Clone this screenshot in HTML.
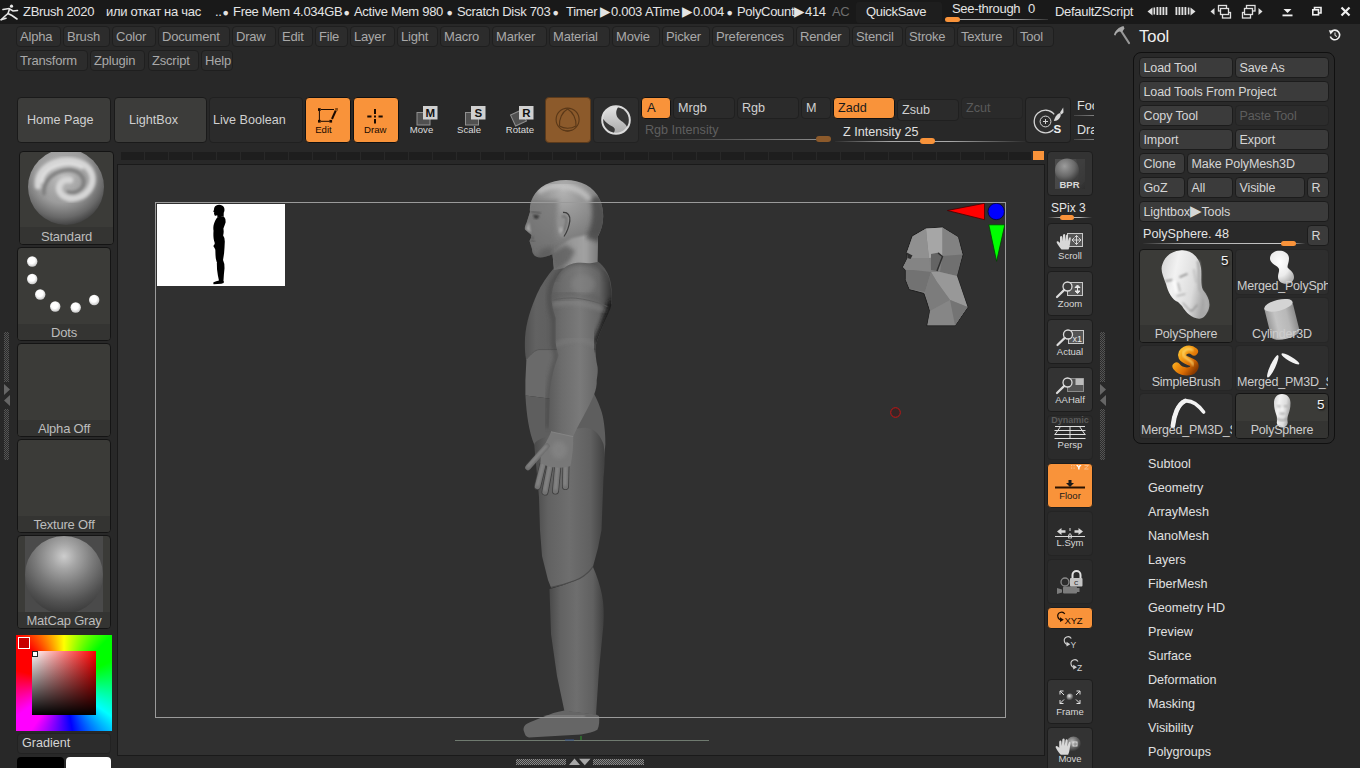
<!DOCTYPE html>
<html><head><meta charset="utf-8"><title>ZBrush 2020</title>
<style>
*{box-sizing:border-box;margin:0;padding:0}
html,body{width:1360px;height:768px;overflow:hidden;background:#282828}
body{font-family:"Liberation Sans","DejaVu Sans",sans-serif;font-size:12.6px;color:#c8c8c8;position:relative}
.abs{position:absolute}
#title{position:absolute;left:0;top:0;width:1360px;height:24px;background:#191919;color:#e4e4e4;font-size:13px;letter-spacing:-0.3px;line-height:24px;white-space:nowrap}
#title span{position:absolute;top:0}
.mb{position:absolute;height:21px;border:1px solid #1f1f1f;border-radius:4px;background:#2c2c2c;color:#a9a9a9;font-size:13px;letter-spacing:-0.2px;line-height:19px;padding-left:3px;white-space:nowrap}
.btn{position:absolute;border:1px solid #1a1a1a;border-radius:4px;background:#3c3c3a;color:#d0d0d0;white-space:nowrap}
.or{background:#f9933a;color:#1a1a1a;border-color:#111}
.sm{font-size:11px}
.tb{position:absolute;height:21px;border:1px solid #1c1c1c;border-radius:4px;background:#3b3b3b;color:#d6d6d6;font-size:12.5px;letter-spacing:-0.1px;line-height:21px;padding-left:3.5px;white-space:nowrap;overflow:hidden}
.sub{position:absolute;left:1148px;color:#e0e0e0;font-size:12.6px;line-height:16px;white-space:nowrap}
.thumb{position:absolute;border:1px solid #141414;border-radius:4px;background:#3b3b38;overflow:hidden}
.thumb .lb{position:absolute;left:0;right:0;bottom:0;height:16px;background:#343432;color:#bdbdbd;font-size:13px;line-height:18px;text-align:center;letter-spacing:-0.2px}
.sh{position:absolute;left:1047px;width:46px;border:1px solid #1d1d1d;border-radius:4px;background:#333;color:#d8d8d8;font-size:9.5px;text-align:center}
.sh .t{position:absolute;left:0;right:0;bottom:6px;line-height:11px}
.tl{background:#2e2e2e;border-color:#262626}
.nm{position:absolute;height:17px;color:#cdcdcd;font-size:12.5px;letter-spacing:-0.2px;line-height:17px;text-align:center;white-space:nowrap;overflow:hidden}
</style></head><body>
<!-- TITLE BAR -->
<div id="title">
<svg class="abs" style="left:0;top:3px" width="20" height="18" viewBox="0 0 20 18"><g fill="none" stroke="#e8e8e8" stroke-width="1.6" stroke-linecap="round"><circle cx="11.5" cy="3.2" r="1.6" fill="#e8e8e8" stroke="none"/><path d="M3 6.5 L9 5.5 L13 8 L17.5 7.5"/><path d="M9.5 6 L8 10.5 L12 12.5 L17 16"/><path d="M8 10.5 L4.5 13.5 L1.5 16.5"/><path d="M1 16.8 L6 15.2"/></g></svg>
<span style="left:23px">ZBrush 2020</span>
<span style="left:106px">или откат на час</span>
<span style="left:215px">..</span>
<span style="left:223px;font-size:10.5px;margin-left:-0.5px">●</span><span style="left:233px">Free Mem 4.034GB</span>
<span style="left:344px;font-size:10.5px;margin-left:-0.5px">●</span><span style="left:354px">Active Mem 980</span>
<span style="left:447px;font-size:10.5px;margin-left:-0.5px">●</span><span style="left:457px">Scratch Disk 703</span>
<span style="left:553px;font-size:10.5px;margin-left:-0.5px">●</span><span style="left:566px">Timer</span><span style="left:600px;font-size:13.5px;line-height:23px">▶</span><span style="left:611px">0.003</span>
<span style="left:645px">ATime</span><span style="left:682px;font-size:13.5px;line-height:23px">▶</span><span style="left:693px">0.004</span>
<span style="left:727px;font-size:10.5px;margin-left:-0.5px">●</span><span style="left:737px">PolyCount</span><span style="left:794px;font-size:13.5px;line-height:23px">▶</span><span style="left:805px">414</span>
<span style="left:832px;color:#6e6e6e">AC</span>
<div class="abs" style="left:856px;top:2px;width:86px;height:21px;background:#1e1e1e;border-radius:3px"></div>
<span style="left:866px">QuickSave</span>
<span style="left:952px;top:-2px;line-height:22px">See-through</span><span style="left:1028px;top:-2px;line-height:22px">0</span>
<div class="abs" style="left:958px;top:19px;width:90px;height:1px;background:linear-gradient(90deg,#aaa,#aaa 60%,#333)"></div>
<div class="abs" style="left:945px;top:17px;width:15px;height:5px;background:#f9933a;border-radius:3px"></div>
<span style="left:1055px">DefaultZScript</span>
<svg class="abs" style="left:1145px;top:4px" width="210" height="16" viewBox="1145 4 210 16">
<g fill="#e0e0e0"><path d="M1147.5 11.5 l5 -4 v8z"/><rect x="1153.5" y="7.5" width="1.6" height="7"/><rect x="1156.5" y="7" width="1.8" height="8"/><rect x="1159.5" y="7" width="1.8" height="8"/><rect x="1162.5" y="7" width="1.8" height="8"/><rect x="1165.5" y="7" width="1.8" height="8"/>
<rect x="1175.5" y="7" width="1.8" height="8"/><rect x="1178.5" y="7" width="1.8" height="8"/><rect x="1181.5" y="7" width="1.8" height="8"/><rect x="1184.5" y="7" width="1.8" height="8"/><rect x="1187.8" y="7.5" width="1.6" height="7"/><path d="M1195.5 11.5 l-5 -4 v8z"/>
<path d="M1210.5 11.5 l4 -3.5 v7z"/><path d="M1262.5 11.5 l-4 -3.5 v7z"/></g>
<g fill="#191919" stroke="#e0e0e0" stroke-width="1.3"><rect x="1218.5" y="5.500" width="8" height="5.500"/><rect x="1222.500" y="12.500" width="8" height="5.500"/><rect x="1220.500" y="8.500" width="8" height="6"/>
<rect x="1246.500" y="5.500" width="8.500" height="5.500"/><rect x="1242.500" y="12.500" width="8" height="5.500"/><rect x="1244.500" y="8.500" width="8" height="6"/></g>
<g fill="#f0f0f0"><path d="M1283.5 9 h8 l-4 4z"/><rect x="1282.5" y="14.5" width="10" height="1.8"/></g>
<g fill="none" stroke="#f0f0f0" stroke-width="1.6"><path d="M1314.500 9.500 v-2 h6.500 v5.500 h-2"/><rect x="1312.800" y="9.800" width="5.700" height="5"/><path d="M1341.500 7.500 l8 8 M1349.500 7.500 l-8 8" stroke-width="2.2"/></g>
</svg>
</div>
<!-- MENUS -->
<div id="menus">
<div class="mb" style="left:16px;top:26px;width:45px">Alpha</div>
<div class="mb" style="left:63px;top:26px;width:47px">Brush</div>
<div class="mb" style="left:112px;top:26px;width:44px">Color</div>
<div class="mb" style="left:158px;top:26px;width:72px">Document</div>
<div class="mb" style="left:232px;top:26px;width:44px">Draw</div>
<div class="mb" style="left:278px;top:26px;width:35px">Edit</div>
<div class="mb" style="left:315px;top:26px;width:33px">File</div>
<div class="mb" style="left:350px;top:26px;width:45px">Layer</div>
<div class="mb" style="left:397px;top:26px;width:41px">Light</div>
<div class="mb" style="left:440px;top:26px;width:50px">Macro</div>
<div class="mb" style="left:492px;top:26px;width:55px">Marker</div>
<div class="mb" style="left:549px;top:26px;width:61px">Material</div>
<div class="mb" style="left:612px;top:26px;width:48px">Movie</div>
<div class="mb" style="left:662px;top:26px;width:48px">Picker</div>
<div class="mb" style="left:712px;top:26px;width:82px">Preferences</div>
<div class="mb" style="left:796px;top:26px;width:54px">Render</div>
<div class="mb" style="left:852px;top:26px;width:51px">Stencil</div>
<div class="mb" style="left:905px;top:26px;width:50px">Stroke</div>
<div class="mb" style="left:957px;top:26px;width:57px">Texture</div>
<div class="mb" style="left:1016px;top:26px;width:38px">Tool</div>
<div class="mb" style="left:16px;top:50px;width:72px">Transform</div>
<div class="mb" style="left:90px;top:50px;width:55px">Zplugin</div>
<div class="mb" style="left:148px;top:50px;width:51px">Zscript</div>
<div class="mb" style="left:201px;top:50px;width:32px">Help</div>
</div>
<!-- TOOLBAR -->
<div class="btn" style="left:17px;top:97px;width:94px;height:46px;line-height:44px;padding-left:9px">Home Page</div>
<div class="btn" style="left:114px;top:97px;width:93px;height:46px;line-height:44px;padding-left:14px">LightBox</div>
<div class="btn" style="left:209px;top:97px;width:94px;height:46px;line-height:44px;padding-left:3px;background:#2b2b2b;border-color:#202020">Live Boolean</div>
<div class="btn or" style="left:305px;top:97px;width:46px;height:46px"></div>
<div class="btn or" style="left:353px;top:97px;width:46px;height:46px"></div>
<div class="btn" style="left:545px;top:97px;width:46px;height:46px;background:#8c5a2b;border-color:#5a3a1c"></div>
<div class="btn" style="left:593px;top:97px;width:46px;height:46px;background:#2d2d2d;border-color:#222"></div>
<svg class="abs" style="left:300px;top:95px" width="345" height="50" viewBox="300 95 345 50" font-family="Liberation Sans, sans-serif" font-size="9.600" text-anchor="middle">
<!-- edit icon -->
<g stroke="#1a0a00" fill="none"><path d="M321 109.500 h13 M319.400 111 v9 M321 121.300 h8.500" stroke-width="1"/><path d="M335.800 110.500 L332 119" stroke-width="2"/></g>
<g fill="#1a0a00"><rect x="318" y="108.200" width="2.700" height="2.700"/><rect x="318" y="119.900" width="2.700" height="2.700"/><rect x="329.400" y="119.900" width="2.700" height="2.700"/></g><rect x="335.200" y="108" width="2.700" height="2.700" fill="#8a4a10"/>
<text x="323.500" y="132.800" fill="#1a0a00">Edit</text>
<!-- draw icon -->
<g stroke="#1a0a00" stroke-width="2"><path d="M375 109 v5 M375 115.500 v2 M375 119 v4.500 M367.300 116.500 h4.200 M378.500 116.500 h4.200"/></g>
<text x="375.300" y="132.800" fill="#1a0a00">Draw</text>
<!-- move -->
<rect x="417" y="112.500" width="13" height="12.500" fill="#505050" stroke="#909090" stroke-width="1"/><rect x="423" y="106" width="14.500" height="13.500" fill="#d0d0d0"/><text x="430.300" y="117.300" font-weight="bold" font-size="11.500" fill="#111">M</text>
<text x="421.500" y="132.800" fill="#dcdcdc">Move</text>
<!-- scale -->
<rect x="465.500" y="112.500" width="13" height="12.500" fill="#505050" stroke="#909090" stroke-width="1"/><rect x="471" y="106" width="14.500" height="13.500" fill="#d0d0d0"/><text x="478.300" y="117.300" font-weight="bold" font-size="11.500" fill="#111">S</text>
<text x="469" y="132.800" fill="#dcdcdc">Scale</text>
<!-- rotate -->
<rect x="512.500" y="112" width="12" height="12" fill="#505050" stroke="#909090" stroke-width="1" transform="rotate(-25 518.500 118)"/><rect x="519" y="106" width="14.500" height="13.500" fill="#d0d0d0"/><text x="526.300" y="117.300" font-weight="bold" font-size="11.500" fill="#111">R</text>
<text x="520" y="132.800" fill="#dcdcdc">Rotate</text>
<!-- gizmo -->
<g fill="none" stroke="#5a3818" stroke-width="1.100"><circle cx="567.600" cy="119.600" r="11.500"/><path d="M567.600 108.900 C573 112 576.500 119 576 126 C571 129 564 129 559.500 126 C559 119 562 112 567.600 108.900Z" stroke-linejoin="round"/><path d="M563.500 130 q4 1.800 8 0"/></g>
<!-- S sphere -->
<clipPath id="cS"><circle cx="616" cy="120" r="12.800"/></clipPath>
<linearGradient id="gS" x1="0" y1="0" x2="0" y2="1"><stop offset="0" stop-color="#e4e4e4"/><stop offset="1" stop-color="#a8a8a8"/></linearGradient>
<circle cx="616" cy="120" r="13.800" fill="url(#gS)" stroke="#dcdcdc" stroke-width="2"/>
<g fill="#383838" clip-path="url(#cS)"><path d="M618.800 106 C614.500 112 616 117 620 120 C623.500 122.500 626.500 124.500 628 129 L632 124 L630 108Z"/><path d="M602.500 118 C605.500 122.500 609 125 612.500 126.500 C615.500 128 615.500 131 613 134 L604 132 L600 120Z"/></g>
</svg>
<div class="btn or" style="left:641px;top:97px;width:30px;height:22px;line-height:20px;padding-left:5px;font-size:13px">A</div>
<div class="btn" style="left:673px;top:97px;width:62px;height:22px;line-height:20px;padding-left:4px;background:#2b2b2b;border-color:#202020">Mrgb</div>
<div class="btn" style="left:737px;top:97px;width:62px;height:22px;line-height:20px;padding-left:4px;background:#2b2b2b;border-color:#202020">Rgb</div>
<div class="btn" style="left:801px;top:97px;width:30px;height:22px;line-height:20px;padding-left:4px;background:#2b2b2b;border-color:#202020">M</div>
<div class="btn or" style="left:833px;top:97px;width:62px;height:22px;line-height:20px;padding-left:4px">Zadd</div>
<div class="btn" style="left:897px;top:99px;width:62px;height:22px;line-height:20px;padding-left:4px;background:#2b2b2b;border-color:#202020">Zsub</div>
<div class="btn" style="left:961px;top:97px;width:62px;height:22px;line-height:20px;padding-left:4px;background:#2a2a2a;border-color:#242424;color:#5a5a5a">Zcut</div>
<div class="abs" style="left:645px;top:122px;color:#5f5f5f;line-height:16px">Rgb Intensity</div>
<div class="abs" style="left:650px;top:139px;width:170px;height:1px;background:linear-gradient(90deg,#2e2e2e,#8a8a8a)"></div>
<div class="abs" style="left:816px;top:136px;width:15px;height:6px;background:#8c5a2b;border-radius:3px"></div>
<div class="abs" style="left:843px;top:124px;color:#e0e0e0;line-height:16px">Z Intensity 25</div>
<div class="abs" style="left:835px;top:141px;width:190px;height:1px;background:linear-gradient(90deg,#2e2e2e,#aaa 30%,#aaa 60%,#2e2e2e)"></div>
<div class="abs" style="left:920px;top:138px;width:15px;height:6px;background:#f9933a;border-radius:3px"></div>
<div class="btn" style="left:1025px;top:97px;width:46px;height:46px;background:#2d2d2d;border-color:#1e1e1e"></div>
<svg class="abs" style="left:1025px;top:97px" width="46" height="46" viewBox="1025 97 46 46"><g fill="none" stroke="#d4d4d4"><path d="M1054.200 114.300 A11.300 11.300 0 1 0 1053.500 129.500" stroke-width="1.300"/><circle cx="1045.500" cy="121.500" r="5.400" stroke-width="1"/><path d="M1043 121.500 h5 M1045.500 119 v5" stroke-width="1"/></g><path d="M1053.800 121 C1055 116.500 1057.500 113.500 1060.500 113 C1061.500 116 1059.500 119.500 1056 120.800Z" fill="#d8d8d8"/><path d="M1060 112.500 L1063.200 107.500 L1063.500 112.500 L1061.500 114.500Z" fill="#d8d8d8"/><text x="1053.600" y="132.800" font-family="Liberation Sans, sans-serif" font-weight="bold" font-size="11.500" fill="#f0f0f0">S</text></svg>
<div class="abs" style="left:1074px;top:97px;width:20px;padding-left:3px;height:46px;overflow:hidden;color:#e0e0e0;white-space:nowrap"><div style="line-height:18px">Focal Shift</div><div style="height:1px;background:linear-gradient(90deg,#444,#808080);margin-left:-3px"></div><div style="line-height:18px;margin-top:5px">Draw Size</div><div style="height:1px;background:linear-gradient(90deg,#444,#808080);margin-left:-3px"></div></div>
<!-- LEFT SHELF -->
<div class="thumb" style="left:19px;top:151px;width:95px;height:94px"><svg class="abs" style="left:0;top:0" width="93" height="76" viewBox="0 0 93 76"><defs><radialGradient id="bs" cx="0.45" cy="0.35" r="0.65"><stop offset="0" stop-color="#bcbcbc"/><stop offset="0.55" stop-color="#9c9c9c"/><stop offset="0.85" stop-color="#686868"/><stop offset="1" stop-color="#444"/></radialGradient><filter id="bl1"><feGaussianBlur stdDeviation="1.6"/></filter></defs><circle cx="46" cy="35" r="38" fill="url(#bs)"/><g filter="url(#bl1)" fill="none" stroke-linecap="round"><path d="M18 34 C16 10 50 2 66 14 C82 28 66 50 48 46 C34 42 38 26 50 28" stroke="#d6d6d6" stroke-width="6.500"/><path d="M24 42 C22 22 48 12 60 22 C70 32 58 44 48 40" stroke="#7c7c7c" stroke-width="3.500"/><path d="M22 30 C24 14 48 8 62 16" stroke="#e4e4e4" stroke-width="2.500"/></g></svg><div class="lb" style="height:17px;line-height:19px">Standard</div></div>
<div class="thumb" style="left:17px;top:247px;width:94px;height:94px"><svg class="abs" style="left:0;top:0" width="92" height="76" viewBox="17.800 248 92 76"><defs><radialGradient id="dt" cx="0.45" cy="0.4" r="0.6"><stop offset="0.5" stop-color="#fff"/><stop offset="1" stop-color="#c8c8c8"/></radialGradient></defs><g fill="url(#dt)"><circle cx="32" cy="261.500" r="5.200"/><circle cx="32" cy="279" r="5.200"/><circle cx="40" cy="294.500" r="5.200"/><circle cx="55" cy="306.500" r="5.200"/><circle cx="75.500" cy="307.500" r="5.200"/><circle cx="94" cy="300" r="5.200"/></g></svg><div class="lb">Dots</div></div>
<div class="thumb" style="left:17px;top:343px;width:94px;height:94px"><div class="lb">Alpha Off</div></div>
<div class="thumb" style="left:17px;top:439px;width:94px;height:94px"><div class="lb">Texture Off</div></div>
<div class="thumb" style="left:17px;top:535px;width:94px;height:94px"><div class="abs" style="left:7px;top:0;width:78px;height:76px;background:#4a4a4a"></div><div class="abs" style="left:7px;top:0px;width:78px;height:78px;border-radius:50%;background:radial-gradient(circle at 50% 26%,#cdcdcd 0,#a6a6a6 18%,#7a7a7a 42%,#525252 66%,#343434 88%,#262626 100%)"></div><div class="lb">MatCap Gray</div></div>
<!-- color picker -->
<div class="abs" style="left:16px;top:635px;width:96px;height:96px;background:conic-gradient(from -45deg at 50% 50%,#f00 0deg,#ff0 45deg,#0f0 90deg,#0f0 110deg,#0ff 170deg,#00f 215deg,#f0f 260deg,#f0f 280deg,#f00 330deg,#f00 360deg)"></div>
<div class="abs" style="left:32px;top:651px;width:64px;height:64px;background:linear-gradient(180deg,rgba(0,0,0,0),#000),linear-gradient(90deg,#fff,#f00)"></div>
<div class="abs" style="left:18px;top:637px;width:12px;height:12px;background:#c80000;border:1px solid #fff"></div>
<div class="abs" style="left:32px;top:651px;width:6px;height:6px;background:#fff;border:1px solid #222"></div>
<div class="btn" style="left:17px;top:733px;width:94px;height:21px;line-height:19px;padding-left:4px;background:#2c2c2c;border-color:#222;color:#d4d4d4">Gradient</div>
<div class="abs" style="left:17px;top:757px;width:47px;height:14px;background:#000;border-radius:4px"></div>
<div class="abs" style="left:66px;top:757px;width:45px;height:14px;background:#fff;border-radius:4px"></div>
<!-- left divider -->
<div class="abs" style="left:4px;top:332px;width:5px;height:50px;background:repeating-conic-gradient(#555 0 25%,#2a2a2a 0 50%) 0 0/2px 2px"></div>
<div class="abs" style="left:4px;top:409px;width:5px;height:51px;background:repeating-conic-gradient(#555 0 25%,#2a2a2a 0 50%) 0 0/2px 2px"></div>
<svg class="abs" style="left:3px;top:383px" width="8" height="26" viewBox="0 0 8 26"><path d="M1 1 l6 5.500 l-6 5.500z M7 12 l-6 5.500 l6 5.500z" fill="#666"/></svg>
<!-- CANVAS -->
<div class="abs" style="left:121px;top:152px;width:910px;height:8px;background:repeating-linear-gradient(90deg,#1e1e1e 0,#1e1e1e 23px,#282828 23px,#282828 24px)"></div>
<div class="abs" style="left:1033px;top:151px;width:11px;height:9px;background:#f9933a"></div>
<div class="abs" style="left:117px;top:164px;width:928px;height:592px;background:#303030;border:1px solid #1a1a1a"></div>
<svg class="abs" style="left:118px;top:165px" width="926" height="590" viewBox="118 165 926 590">
<defs>
<linearGradient id="gH" x1="0" y1="0" x2="1" y2="0"><stop offset="0" stop-color="#4e4e4e"/><stop offset="0.18" stop-color="#646464"/><stop offset="0.5" stop-color="#7a7a7a"/><stop offset="0.8" stop-color="#6a6a6a"/><stop offset="1" stop-color="#444"/></linearGradient>
<linearGradient id="gArm" x1="0" y1="0" x2="1" y2="0"><stop offset="0" stop-color="#5c5c5c"/><stop offset="0.2" stop-color="#6c6c6c"/><stop offset="0.5" stop-color="#7a7a7a"/><stop offset="0.8" stop-color="#666"/><stop offset="1" stop-color="#343434"/></linearGradient>
<linearGradient id="gTor" x1="0" y1="0" x2="1" y2="0"><stop offset="0" stop-color="#525252"/><stop offset="0.15" stop-color="#626262"/><stop offset="0.45" stop-color="#5e5e5e"/><stop offset="1" stop-color="#505050"/></linearGradient>
<linearGradient id="gLeg" x1="0" y1="0" x2="1" y2="0"><stop offset="0" stop-color="#4a4a4a"/><stop offset="0.2" stop-color="#626262"/><stop offset="0.5" stop-color="#6e6e6e"/><stop offset="0.8" stop-color="#606060"/><stop offset="1" stop-color="#404040"/></linearGradient>
<radialGradient id="gHead" cx="0.5" cy="0.22" r="0.75" fx="0.48" fy="0.15"><stop offset="0" stop-color="#b4b4b4"/><stop offset="0.25" stop-color="#9a9a9a"/><stop offset="0.55" stop-color="#828282"/><stop offset="0.85" stop-color="#666"/><stop offset="1" stop-color="#505050"/></radialGradient>
<linearGradient id="gNeck" x1="0" y1="0" x2="1" y2="0"><stop offset="0" stop-color="#727272"/><stop offset="0.35" stop-color="#949494"/><stop offset="0.7" stop-color="#a2a2a2"/><stop offset="1" stop-color="#767676"/></linearGradient>
<filter id="b1"><feGaussianBlur stdDeviation="1"/></filter><filter id="b2"><feGaussianBlur stdDeviation="2.2"/></filter>
<clipPath id="cHead"><path id="pHead" d="M566 180 C580 180 594 186 600 200 C605 212 604 226 598 236 L597.500 262 L554 270 L552.500 254 C546 257 540 258.500 536 256.500 C533 255 532 252 532 249 L530.500 244 L529.500 241 L531 238 L531.500 235 L525 229.500 C524.500 228 525 226 526.500 223 L530 212 C529.500 207 530.500 202 533 197 C538 187 550 180 566 180Z"/></clipPath>
<clipPath id="cArm"><use href="#pArm"/></clipPath>
<path id="pTorso" d="M554 268 C547 276 541 285 537 294 C531 308 526 322 525 338 C524.500 350 525.500 358 526.400 360 L525.400 380 L525.400 396 C526 410 527 425 534 444 L539 497 L540 530 L542 556 L548 580 L551 587.400 L549.500 589 L551 634 L557 676 L564.400 711 L545 716.300 L527 723.800 L524 729.800 L527 737.300 L581 734.300 L597.400 729.800 L599 716.300 L596 714.800 L599 670 L603.400 625 L602 595 L593 568 L600.400 520 L603.500 477.600 L605.400 438.600 L602.500 413.200 L593.700 395.600 L596.700 380 L597.600 367.200 L595.700 345.700 L605.400 320.300 L611.300 302.700 L609.400 279.300 L601 266 L597.500 262Z"/>
</defs>
<rect x="157" y="204" width="128" height="82" fill="#fff"/>
<!-- silhouette -->
<g transform="translate(213.200 204.800) scale(0.1425) translate(-524 -180.200)" fill="#000"><use href="#pHead"/><use href="#pTorso"/><path d="M548 438 L525 470 L536 489 L544 495 L555 494 L565 489 L572 438Z"/></g>
<!-- floor line -->
<rect x="455" y="740" width="254" height="1" fill="#6f7a6f"/><rect x="580.500" y="736" width="1" height="4" fill="#2a9a2a"/><rect x="565" y="739.500" width="9" height="1" fill="#35508a"/>
<!-- FIGURE -->
<g id="fig">
<!-- back sliver of torso -->
<path d="M586 260 L597 261 C605 266 611 276 611.500 290 L611.500 304 L600 310 L586 272Z" fill="#555"/>
<!-- chest -->
<path d="M554 268 C547 276 541 285 537 294 C531 308 526 322 525 338 C524.500 350 525.500 358 526.400 360 L560 362 L594 340 L598 266Z" fill="url(#gTor)"/>
<!-- abdomen -->
<path d="M526.400 359.400 C531 354 535 350 539 349.600 L560 349.600 L560 400 L548.800 398.500 L525.400 395.600 L525.400 380Z" fill="#6a6a6a"/>
<path d="M526.400 359.400 C531 354 535 350 539 349.600 L558 349.600" fill="none" stroke="#565656" stroke-width="1"/>
<!-- pelvis / hip -->
<path d="M525.400 395.600 L548.800 398.500 L560 396 L593.700 393 C598 402 602 410 603.500 420 C605 430 605.400 436 605.400 444 L603 470 L534.200 444.400 C529 432 526.500 415 525.400 395.600Z" fill="#5e5e5e"/>
<!-- thigh -->
<path d="M534.200 444.400 C536 438 560 432 578 428.500 C590 426 598 430 603.500 444 C605.500 455 604.500 468 603.500 477.600 L601.500 530 L598 548 L593 566.500 C588 574 580 579 575 580.500 C566 584 558 586 551 587.400 L548 580 L542 556 L540 530 L539 497Z" fill="url(#gLeg)"/>
<!-- shin -->
<path d="M549.500 589 C558 587 568 583.500 575 580.500 C582 578 589 573 593 567 C597 576 600 585 602 595 C604 605 604 615 603.400 625 L599 670 L596 714.800 L564.400 711 L557 676 L551 634Z" fill="url(#gLeg)"/>
<path d="M551 587.400 C558 586 566 584 575 580.500 C580 579 588 574 593 566.500" fill="none" stroke="#4c4c4c" stroke-width="1.200"/>
<!-- foot -->
<path d="M564.400 710.500 C556 712 550 714 545 716.300 C538 719 531 721.500 527 723.800 C523.500 726 523 729 524 731.500 C525 735 526 737 529 737.500 L581 734.500 C588 733.500 594 732 597.400 729.800 C599.500 726 599.500 720 599 716 L596 714.500Z" fill="#666"/>
<path d="M545 717 C555 714.500 570 716 585 716" fill="none" stroke="#8a8a8a" stroke-width="2.500" filter="url(#b1)" opacity="0.7"/>
<!-- head -->
<g clip-path="url(#cHead)">
<rect x="520" y="175" width="90" height="100" fill="url(#gHead)"/>
<!-- neck -->
<path d="M550 252 L572 238 L600 232 L600 266 L553 273Z" fill="url(#gNeck)" filter="url(#b1)"/>
<path d="M551 254 L566 245 L575 251 L569 262 L554 271Z" fill="#5e5e5e" filter="url(#b2)" opacity="0.800"/>
<!-- face shading -->
<path d="M530 200 L558 200 L554 248 L536 258 L528 245 L524 229Z" fill="#747474" filter="url(#b2)" opacity="0.700"/>
<path d="M600 196 C608 210 608 230 599 242 L586 238 C593 224 594 210 590 198Z" fill="#4a4a4a" filter="url(#b2)" opacity="0.850"/>
<path d="M538 192 C552 182 578 184 590 200" fill="none" stroke="#cacaca" stroke-width="5" filter="url(#b2)" opacity="0.850"/>
<path d="M540 250 L552 246 L552 256 L538 258Z" fill="#585858" filter="url(#b2)" opacity="0.600"/>
<!-- eye -->
<path d="M533 214.500 L539.500 215.500 L537.500 219 L534.500 218.500Z" fill="#383838" filter="url(#b1)"/>
<path d="M531 211.500 L541 213.500" stroke="#505050" stroke-width="1.400" fill="none" filter="url(#b1)"/>
<path d="M530.500 241 L535 241.800" stroke="#4c4c4c" stroke-width="1.200" fill="none" filter="url(#b1)"/>
<path d="M526 229 L529 222 L531 233Z" fill="#a6a6a6" filter="url(#b1)"/>
<path d="M531 236 L534 238 L532 240Z" fill="#555" filter="url(#b1)"/>
</g>
<!-- ear -->
<path d="M559 216 C562 211 568 212 569.500 217 C570.500 223 568 231 565 236 C563 238.500 560 237 559 234 C557 229 557 221 559 216Z" fill="#909090" filter="url(#b1)"/>
<path d="M563 212.500 C568 212 570.500 216 569.800 221 C569 227 567 232 564 236.500" fill="none" stroke="#3c3c3c" stroke-width="1.300"/>
<path d="M562 217 C565 215.500 567 217.500 566.500 221 C566 226 564.500 230 562.500 233" fill="none" stroke="#5e5e5e" stroke-width="1.200" filter="url(#b1)"/>
<ellipse cx="561" cy="230" rx="2" ry="3" fill="#a8a8a8" filter="url(#b1)"/>
<path d="M566 268 C556 274 550 284 549.500 296 C549 306 552 314 553.500 320 L553.500 342 C554 350 556.500 354 556.500 358 C554 366 551 374 550 384 L548 400 L547.500 428" fill="none" stroke="#3c3c3c" stroke-width="4" filter="url(#b2)" opacity="0.550"/>
<!-- arm -->
<path id="pArm" d="M578 262.700 C565 263 554 275 551.700 295 C551 305 554 312 555.700 318 L555.700 342 C556 348 558 352 558.600 355.400 C556 362 553.500 370 552.700 375 C550.500 385 549.500 395 549.800 400 L548.800 428.800 L551 431.700 L573.200 436.600 C576 430 579 424 582 419 C587 410 591 402 593.700 395.600 C596 390 597 385 596.700 380 C597.500 375 598 371 597.600 367.200 C596 360 595 352 595.700 345.700 C598 337 602 328 605.400 320.300 C609 312 611.500 308 611.300 302.700 C612 295 611 287 609.400 279.300 C606 268 594 262 578 262.700Z" fill="url(#gArm)"/>
<g clip-path="url(#cArm)">
<path d="M552 280 C556 266 566 260 580 260 C596 260 606 266 611 280" fill="none" stroke="#4a4a4a" stroke-width="9" filter="url(#b2)" opacity="0.600"/>
<path d="M550 296 C562 293.500 572 293 578 294 C590 295.500 601 299 610 303" fill="none" stroke="#5a5a5a" stroke-width="5" filter="url(#b2)" opacity="0.450"/>
<path d="M552 304.500 C562 302.500 572 302 578 303 C590 304.500 600 308 609 312" fill="none" stroke="#8a8a8a" stroke-width="4" filter="url(#b2)" opacity="0.600"/>
<ellipse cx="583" cy="284" rx="12" ry="10" fill="#868686" filter="url(#b2)" opacity="0.500"/>
<path d="M612 300 C611 310 606 320 602 330 C598 338 596 344 596 350" fill="none" stroke="#181818" stroke-width="8" filter="url(#b2)" opacity="0.850"/>
<path d="M553 346 C564 340 576 338 584 340 C590 341.500 594 344 597 348" fill="none" stroke="#848484" stroke-width="4" filter="url(#b2)" opacity="0.500"/>
</g>
<path d="M553.700 299.800 C562 298 572 297.500 578 298.500 C590 300 600 303 607.400 306.600" fill="none" stroke="#5c5c5c" stroke-width="1" opacity="0.800"/>
<!-- hand -->
<g fill="none" stroke-linecap="round">
<g stroke="#3e3e3e" stroke-width="7"><path d="M544 460 L537.500 486.500"/><path d="M550.500 463 L545 492"/><path d="M558 464 L555.500 491"/><path d="M566 462 L565.500 486.500"/></g>
<g stroke="#727272" stroke-width="5.400"><path d="M544 460 L537.500 486.500"/><path d="M550.500 463 L545 492"/><path d="M558 464 L555.500 491"/><path d="M566 462 L565.500 486.500"/></g>
<g stroke="#8a8a8a" stroke-width="2.200" filter="url(#b1)"><path d="M543.500 462 L537.500 485"/><path d="M550 465 L545 490"/><path d="M557.500 466 L555.500 489"/><path d="M565.500 464 L565 485"/></g>
</g>
<path d="M551 431.700 L573.200 436.600 C573.500 446 572.500 456 570.500 466 C562 469 548 468 540.500 463 C540 456 543 447 548.800 437Z" fill="#787878"/>
<path d="M547 446 L528 467.500" fill="none" stroke="#6e6e6e" stroke-width="5.600" stroke-linecap="round"/>
<path d="M546.500 446 L528 466.500" fill="none" stroke="#8a8a8a" stroke-width="2.200" stroke-linecap="round" filter="url(#b1)"/>
<ellipse cx="559" cy="450" rx="8" ry="9" fill="#868686" filter="url(#b2)" opacity="0.700"/>
<path d="M551 431.700 L573.200 436.600" stroke="#8c8c8c" stroke-width="1" fill="none" opacity="0.700"/>
</g>
<!-- lowpoly head -->
<g stroke-linejoin="round">
<path d="M925.900 228.100 L942.500 227.100 L958.100 236.900 L963 254.400 L957.100 275.900 L967.900 307.200 L955.200 325.700 L926.900 325.700 L929.800 311.100 L923.900 293.500 L909.300 289.600 L905.400 279.800 L905.400 270.100 L902.500 267.100 L907.300 258.300 L906.400 252.500 L912.200 235.900Z" fill="#808080" stroke="#1e1e1e" stroke-width="1"/>
<path d="M926 228.500 L942.500 227.500 L942.500 256 L929 258 L927 240Z" fill="#a6a6a6"/>
<path d="M912.500 236.500 L926 228.500 L927 240 L929 258 L907.500 258 L906.800 252.500Z" fill="#909090"/>
<path d="M942.500 227.500 L958 237 L962.500 254.400 L942.500 256Z" fill="#828282"/>
<path d="M962.500 254.400 L957 276 L940 272 L942.500 256Z" fill="#707070"/>
<path d="M907.500 258 L929 258 L931 272 L913 270 L905.800 270 L903 267Z" fill="#848484"/>
<path d="M905.800 270 L913 270 L931 272 L925 292 L909.500 289 L905.800 279.800Z" fill="#727272"/>
<path d="M931 272 L940 272 L957 276 L967.500 307 L950 300 L937 282Z" fill="#989898"/>
<path d="M925 292 L931 272 L937 282 L950 300 L930 311Z" fill="#7c7c7c"/>
<path d="M950 300 L967.500 307 L955 325.300 L927.300 325.300 L930 311Z" fill="#868686"/>
<path d="M950 300 L967.500 307 L955 325.300Z" fill="#747474"/>
<path d="M931 254 L939 252.500 L942.500 256.500 L937 271 L931 270Z" fill="#646464"/>
<path d="M938 253 L942.500 256.500 L937 271" fill="none" stroke="#303030" stroke-width="1.500"/>
<path d="M906.800 252.500 L912.500 255.500 L910.500 259 L907.500 258Z" fill="#2e2e2e"/>
</g>
<!-- axis gizmo -->
<path d="M947.400 210.500 L984.500 203.300 L984.500 219.700Z" fill="#f00" stroke="#400" stroke-width="0.800"/>
<circle cx="996.200" cy="211.500" r="8.200" fill="#00f" stroke="#003" stroke-width="0.800"/>
<path d="M988.800 224.800 L1004.800 224.800 L996.600 261.300Z" fill="#0f0" stroke="#040" stroke-width="0.800"/>
<!-- cursor -->
<circle cx="895.500" cy="412.500" r="4.800" fill="#3a1a1a" fill-opacity="0.500" stroke="#c81414" stroke-width="1"/>
<!-- frame -->
<rect x="155.500" y="202.500" width="850" height="515" fill="none" stroke="#9a9a9a" stroke-width="1"/>
</svg>
<!-- bottom arrows -->
<div class="abs" style="left:516px;top:759px;width:50px;height:6px;background:repeating-conic-gradient(#8a8a8a 0 25%,#3a3a3a 0 50%) 0 0/2px 2px"></div>
<div class="abs" style="left:593px;top:759px;width:51px;height:6px;background:repeating-conic-gradient(#8a8a8a 0 25%,#3a3a3a 0 50%) 0 0/2px 2px"></div>
<svg class="abs" style="left:568px;top:758px" width="24" height="8" viewBox="0 0 24 8"><path d="M1 7 L6.500 0.500 L12 7Z M11 0.800 L22.500 0.800 L16.800 7.300Z" fill="#a8a8a8"/></svg>
<!-- SHELF -->
<div class="sh" style="top:151px;height:45px"></div>
<div class="abs" style="left:1051px;top:200px;width:40px;color:#e6e6e6;line-height:16px;white-space:nowrap;font-size:12px">SPix 3</div>
<div class="abs" style="left:1048px;top:217px;width:44px;height:1px;background:linear-gradient(90deg,#2a2a2a,#bbb 30%,#bbb 70%,#2a2a2a)"></div>
<div class="abs" style="left:1060px;top:215px;width:14px;height:5px;background:#f9933a;border-radius:3px"></div>
<div class="sh" style="top:223px;height:45px"><div class="t">Scroll</div></div>
<div class="sh" style="top:271px;height:45px"><div class="t">Zoom</div></div>
<div class="sh" style="top:319px;height:45px"><div class="t">Actual</div></div>
<div class="sh" style="top:367px;height:45px"><div class="t">AAHalf</div></div>
<div class="sh" style="top:415px;height:45px;background:#2b2b2b;border-color:#242424"><div class="abs" style="left:0;right:0;top:0px;font-size:9px;font-weight:bold;color:#5c5c5c;line-height:9px">Dynamic</div><div class="t" style="bottom:9px">Persp</div></div>
<div class="sh or" style="top:463px;height:45px;background:#f9933a;color:#1a1a1a"><div class="t">Floor</div></div>
<div class="sh" style="top:511px;height:45px;background:#2b2b2b;border-color:#242424"><div class="t" style="bottom:7px">L.Sym</div></div>
<div class="sh" style="top:559px;height:45px;background:#2b2b2b;border-color:#242424"></div>
<div class="sh or" style="top:607px;height:22px;background:#f9933a;color:#1a1a1a"></div>
<div class="sh" style="top:679px;height:45px"><div class="t">Frame</div></div>
<div class="sh" style="top:727px;height:45px"><div class="t" style="bottom:7px">Move</div></div>
<svg class="abs" style="left:1045px;top:148px" width="64" height="620" viewBox="1045 148 64 620" font-family="Liberation Sans, sans-serif">
<defs><radialGradient id="bpr" cx="0.4" cy="0.32" r="0.7"><stop offset="0" stop-color="#9c9c9c"/><stop offset="0.6" stop-color="#6a6a6a"/><stop offset="1" stop-color="#3a3a3a"/></radialGradient><linearGradient id="bprb" x1="0" y1="0" x2="1" y2="1"><stop offset="0" stop-color="#4a4a4a"/><stop offset="0.5" stop-color="#484848"/><stop offset="1" stop-color="#2e2e2e"/></linearGradient>
<radialGradient id="ball" cx="0.4" cy="0.35" r="0.65"><stop offset="0" stop-color="#e8e8e8"/><stop offset="0.5" stop-color="#8a8a8a"/><stop offset="1" stop-color="#323232"/></radialGradient>
<g id="mag"><circle cx="0" cy="0" r="4.500" fill="#3a3a3a" stroke="#dcdcdc" stroke-width="1.300"/><path d="M-3.200 3.400 L-10.500 10.500" stroke="#dcdcdc" stroke-width="2.200" stroke-linecap="round"/></g>
<g id="hand" fill="#d8d8d8"><path d="M-4.500 6.500 C-6.500 4 -8.500 1.500 -9.500 -1 C-9 -2.500 -7.500 -2 -6 0 L-6 -6 C-5.500 -7.500 -4 -7.500 -3.800 -6 L-3.500 -2 L-3 -8 C-2.500 -9.500 -1 -9.500 -0.800 -8 L-0.800 -2 L0 -7.500 C0.500 -9 2 -8.500 2 -7 L1.800 -1.500 L3 -5 C3.800 -6.500 5 -5.800 4.800 -4.500 L3.800 2 C3.500 4 3 5.500 2.500 6.500Z"/></g>
</defs>
<!-- BPR -->
<rect x="1055" y="159" width="30" height="30" fill="url(#bprb)"/><path d="M1076 159 h9 v22 q-4 6 -12 8 q10 -10 3 -30z" fill="#3a3a3a" opacity="0.700"/><circle cx="1067" cy="170.500" r="12" fill="url(#bpr)"/>
<text x="1069.500" y="187.500" font-size="9.500" font-weight="bold" fill="#d8d8d8" text-anchor="middle">BPR</text>
<!-- Scroll -->
<rect x="1067.500" y="233.500" width="15" height="13" fill="#555" stroke="#c8c8c8" stroke-width="1"/><path d="M1076.500 235.500 v9 M1072 240 h9 M1074.500 237.500 l2 -2 l2 2 M1074.500 242.500 l2 2 l2 -2 M1074 238 l-2 2 l2 2 M1079 238 l2 2 l-2 2" stroke="#e0e0e0" stroke-width="0.900" fill="none"/>
<use href="#hand" transform="translate(1066 243)"/>
<!-- Zoom -->
<rect x="1067.500" y="282.500" width="15" height="13" fill="#555" stroke="#c8c8c8" stroke-width="1"/><path d="M1077.500 286 v7 M1075 287.500 l2.500 -2.500 l2.500 2.500z M1075 291 l2.500 2.500 l2.500 -2.500z" stroke="#e8e8e8" stroke-width="1" fill="#e8e8e8"/>
<use href="#mag" transform="translate(1067.500 286.500)"/>
<!-- Actual -->
<rect x="1068.500" y="330.500" width="15" height="13" fill="#555" stroke="#c8c8c8" stroke-width="1"/><text x="1072.500" y="342" font-size="9" fill="#e8e8e8">x1</text>
<use href="#mag" transform="translate(1068 334.500)"/>
<!-- AAHalf -->
<rect x="1067.500" y="378.500" width="16" height="13" fill="#555" stroke="#8a8a8a" stroke-width="1"/><rect x="1075.500" y="378.500" width="8" height="6.500" fill="#bdbdbd"/>
<use href="#mag" transform="translate(1067.500 382.500)"/>
<!-- Persp grid -->
<g stroke="#e0e0e0" stroke-width="1" fill="none"><path d="M1055 426.500 h30 M1054.500 430.500 h31 M1054.500 434.500 h31 M1054.500 438.500 h31"/><path d="M1060.500 426.500 L1055 434.500 M1070 426.500 V438.500 M1079.500 426.500 L1085 434.500"/></g>
<!-- Floor -->
<rect x="1055" y="486.500" width="30" height="2" fill="#2a1200"/><path d="M1068.500 480 h3 v3 h2.500 l-4 4 l-4 -4 h2.500z" fill="#1a1a1a"/>
<g fill="#fbbd87"><rect x="1071" y="465" width="1.200" height="1.200"/><rect x="1073.500" y="465" width="1.200" height="1.200"/><rect x="1071" y="467.500" width="1.200" height="1.200"/><rect x="1073.500" y="467.500" width="1.200" height="1.200"/></g><path d="M1076 465 h2 l0.800 1.500 l0.800 -1.500 h2 l-2 2.500 v2 h-1.500 v-2z" fill="#fff"/><path d="M1084.500 465.500 h4 l-4 3.500 h4" stroke="#fbbd87" stroke-width="1" fill="none"/>
<!-- L.Sym -->
<g fill="#d8d8d8"><path d="M1057 531.500 l4.500 -3.500 v2.300 h4 v2.400 h-4 v2.300z M1083 531.500 l-4.500 -3.500 v2.300 h-4 v2.400 h4 v2.300z"/><rect x="1055" y="536" width="30" height="1"/><rect x="1069.500" y="528" width="1" height="3"/><rect x="1069.500" y="533" width="1" height="2"/><rect x="1068.500" y="535" width="3" height="3" fill="none" stroke="#d8d8d8" stroke-width="0.800"/></g>
<!-- camera lock -->
<g fill="#7c7c7c"><circle cx="1065" cy="582" r="4" fill="none" stroke="#8a8a8a" stroke-width="1.300"/><rect x="1063" y="586.500" width="14" height="7" rx="1"/><path d="M1057 588 l5 1.500 v3 l-5 1.500z"/><rect x="1077" y="588" width="2.500" height="4"/></g>
<path d="M1072.500 579 v-4 a4 4 0 0 1 8 0 v4" fill="none" stroke="#e0e0e0" stroke-width="2"/><rect x="1070" y="578" width="12.500" height="8.500" rx="1" fill="#c4c4c4"/><text x="1074" y="585" font-size="6" font-weight="bold" fill="#4a4a4a">C</text>
<!-- XYZ -->
<path d="M1064.800 614 a3.800 3.800 0 1 0 -3 5.800" fill="none" stroke="#1a0a00" stroke-width="1.200"/><path d="M1060 617.300 l3.800 2.500 l-3.800 2.200z" fill="#1a0a00"/>
<text x="1064.500" y="623.500" font-size="9.500" fill="#1a0a00" letter-spacing="-0.200">XYZ</text>
<!-- Y -->
<path d="M1071.300 638.500 a3.800 3.800 0 1 0 -3 5.800" fill="none" stroke="#d0d0d0" stroke-width="1.100"/><path d="M1066.500 641.800 l3.800 2.500 l-3.800 2.200z" fill="#d0d0d0"/><text x="1070.500" y="648" font-size="8.500" fill="#d0d0d0">Y</text>
<!-- Z -->
<path d="M1078 661.500 a3.800 3.800 0 1 0 -3 5.800" fill="none" stroke="#d0d0d0" stroke-width="1.100"/><path d="M1073.200 664.800 l3.800 2.500 l-3.800 2.200z" fill="#d0d0d0"/><text x="1077" y="671" font-size="8.500" fill="#d0d0d0">Z</text>
<!-- Frame -->
<circle cx="1070" cy="697" r="3.500" fill="url(#ball)"/>
<g stroke="#e0e0e0" stroke-width="1" fill="none"><path d="M1060 691 h3.500 M1060 691 v3.500 M1060 691 l4 4 M1080 691 h-3.500 M1080 691 v3.500 M1080 691 l-4 4 M1060 703.500 h3.500 M1060 703.500 v-3.500 M1060 703.500 l4 -4 M1080 703.500 h-3.500 M1080 703.500 v-3.500 M1080 703.500 l-4 -4"/></g>
<!-- Move -->
<circle cx="1073.500" cy="744" r="7.500" fill="url(#ball)" opacity="0.75"/><rect x="1073" y="742" width="4" height="4" fill="none" stroke="#e8e8e8" stroke-width="0.900"/><rect x="1074.500" y="743.500" width="1" height="1" fill="#e8e8e8"/>
<use href="#hand" transform="translate(1065.500 748) scale(1.050)"/>
</svg>
<!-- right divider -->
<div class="abs" style="left:1100px;top:332px;width:5px;height:50px;background:repeating-conic-gradient(#555 0 25%,#2a2a2a 0 50%) 0 0/2px 2px"></div>
<div class="abs" style="left:1100px;top:409px;width:5px;height:51px;background:repeating-conic-gradient(#555 0 25%,#2a2a2a 0 50%) 0 0/2px 2px"></div>
<svg class="abs" style="left:1099px;top:383px" width="8" height="26" viewBox="0 0 8 26"><path d="M1 1 l6 5.500 l-6 5.500z M7 12 l-6 5.500 l6 5.500z" fill="#666"/></svg>
<!-- TOOLPANEL -->
<svg class="abs" style="left:1110px;top:24px" width="24" height="24" viewBox="1110 24 24 24"><path d="M1121.500 31.500 L1129 43" stroke="#969696" stroke-width="2.200" stroke-linecap="round"/><path d="M1114 35 C1115 30.500 1119 27 1123.500 26 L1124.500 28.500 L1122 32 L1119.500 31.500 C1117.500 32 1116 33.500 1115.500 35.500Z" fill="#a8a8a8"/></svg>
<div class="abs" style="left:1139px;top:26px;font-size:16.500px;line-height:20px;color:#f0f0f0">Tool</div>
<svg class="abs" style="left:1328px;top:28px" width="14" height="14" viewBox="0 0 14 14"><path d="M3.200 3.800 A4.800 4.800 0 1 1 2.300 8.500" fill="none" stroke="#f0f0f0" stroke-width="1.600"/><path d="M0.800 2.200 L5.800 2.800 L2.600 6.600Z" fill="#f0f0f0"/><path d="M7 4.500 V7.500 L9 8.500" stroke="#f0f0f0" stroke-width="1" fill="none"/></svg>
<div class="abs" style="left:1133px;top:52px;width:202px;height:392px;border:1.500px solid #101010;border-radius:8px;background:#292929"></div>
<div class="tb" style="left:1139px;top:57px;width:94px">Load Tool</div><div class="tb" style="left:1235px;top:57px;width:94px">Save As</div>
<div class="tb" style="left:1139px;top:81px;width:190px">Load Tools From Project</div>
<div class="tb" style="left:1139px;top:105px;width:94px">Copy Tool</div><div class="tb" style="left:1235px;top:105px;width:94px;background:#2c2c2c;border-color:#242424;color:#5e5e5e">Paste Tool</div>
<div class="tb" style="left:1139px;top:129px;width:94px">Import</div><div class="tb" style="left:1235px;top:129px;width:94px">Export</div>
<div class="tb" style="left:1139px;top:153px;width:46px">Clone</div><div class="tb" style="left:1187px;top:153px;width:142px">Make PolyMesh3D</div>
<div class="tb" style="left:1139px;top:177px;width:46px">GoZ</div><div class="tb" style="left:1187px;top:177px;width:46px">All</div><div class="tb" style="left:1235px;top:177px;width:70px">Visible</div><div class="tb" style="left:1307px;top:177px;width:22px">R</div>
<div class="tb" style="left:1139px;top:201px;width:190px">Lightbox<span style="font-size:15px;line-height:10px">▶</span>Tools</div>
<div class="abs" style="left:1143px;top:226px;color:#e4e4e4;line-height:16px">PolySphere. 48</div>
<div class="abs" style="left:1143px;top:243px;width:162px;height:1px;background:linear-gradient(90deg,#2e2e2e,#aaa 25%,#ccc 90%,#2e2e2e)"></div>
<div class="abs" style="left:1281px;top:241px;width:15px;height:5px;background:#f9933a;border-radius:3px"></div>
<div class="tb" style="left:1307px;top:225px;width:22px">R</div>
<div class="thumb" style="left:1139px;top:249px;width:94px;height:94px"><div class="lb" style="height:17px"></div></div>
<div class="thumb tl" style="left:1235px;top:249px;width:94px;height:46px"></div>
<div class="thumb tl" style="left:1235px;top:297px;width:94px;height:46px"></div>
<div class="thumb tl" style="left:1139px;top:345px;width:94px;height:46px"></div>
<div class="thumb tl" style="left:1235px;top:345px;width:94px;height:46px"></div>
<div class="thumb tl" style="left:1139px;top:393px;width:94px;height:46px"></div>
<div class="thumb" style="left:1235px;top:393px;width:94px;height:46px"><div class="lb" style="height:17px"></div></div>
<!-- TOOLICONS -->
<svg class="abs" style="left:1136px;top:246px" width="196" height="196" viewBox="1136 246 196 196">
<defs>
<linearGradient id="hd1" x1="0" y1="0" x2="1" y2="0.300"><stop offset="0" stop-color="#d2d2d2"/><stop offset="0.350" stop-color="#f2f2f2"/><stop offset="0.750" stop-color="#dcdcdc"/><stop offset="1" stop-color="#a8a8a8"/></linearGradient>
<linearGradient id="gold" x1="0" y1="0" x2="1" y2="1"><stop offset="0" stop-color="#ffd040"/><stop offset="0.350" stop-color="#f39a14"/><stop offset="0.700" stop-color="#d96c04"/><stop offset="1" stop-color="#8a3a00"/></linearGradient>
<radialGradient id="wb" cx="0.400" cy="0.350" r="0.700"><stop offset="0" stop-color="#fff"/><stop offset="0.600" stop-color="#ececec"/><stop offset="1" stop-color="#b4b4b4"/></radialGradient>
<linearGradient id="cyl" x1="0" y1="0" x2="1" y2="0"><stop offset="0" stop-color="#9a9a9a"/><stop offset="0.300" stop-color="#c4c4c4"/><stop offset="0.700" stop-color="#b8b8b8"/><stop offset="1" stop-color="#8c8c8c"/></linearGradient>
<filter id="tb1"><feGaussianBlur stdDeviation="0.800"/></filter>
<clipPath id="cT1"><rect x="1140" y="250" width="92" height="75.500"/></clipPath>
</defs>
<!-- big head -->
<g clip-path="url(#cT1)">
<path id="bh" d="M1180 250.500 C1190 249 1199 256 1201 268 C1202 276 1200 284 1203 290 C1208 296 1210.500 302 1209 308 C1207 315 1203 319 1199 318.800 C1192 318 1186 313 1182 306 L1178 302 C1172 300 1168 292 1166 284 C1163 276 1160 270 1162.500 264 C1165 256 1172 251 1180 250.500Z" fill="url(#hd1)"/>
<g filter="url(#tb1)" fill="none" stroke-linecap="round">
<path d="M1198 262 C1200 270 1198 280 1200 290 C1205 296 1208 303 1206 310" stroke="#b0b0b0" stroke-width="3"/>
<path d="M1166 281 L1172 280" stroke="#8a8a8a" stroke-width="1.600"/><path d="M1180 277 L1187 274" stroke="#8a8a8a" stroke-width="1.600"/>
<path d="M1174 281 L1176 292" stroke="#fff" stroke-width="2"/><path d="M1178 283 L1180 291" stroke="#a4a4a4" stroke-width="1.200"/>
<path d="M1177 296 L1185 294" stroke="#9a9a9a" stroke-width="1.200"/>
<path d="M1183 303 C1187 307 1189 311 1192 311 L1197 305" stroke="#6a6a6a" stroke-width="1"/>
<path d="M1194 270 L1196 282" stroke="#c2c2c2" stroke-width="2"/>
</g></g>
<!-- merged polysph -->
<path d="M1279.400 250.800 C1285 250.800 1289 254 1289 258.500 C1289 262 1287.500 264.500 1287.500 267 C1287.500 269 1294 271 1294 277 C1294 281 1290.500 283.800 1286 283.800 C1281.500 283.800 1278 281 1278 277 C1278 274 1279.500 271.500 1279 269 C1278.500 266 1270 264 1270 258.500 C1270 254 1274 250.800 1279.400 250.800Z" fill="url(#wb)"/>
<!-- cylinder -->
<g transform="rotate(-14 1281 316)"><path d="M1266.500 305 L1266.500 334 A14.500 5.500 0 0 0 1295.500 334 L1295.500 305Z" fill="url(#cyl)"/><ellipse cx="1281" cy="305" rx="14.500" ry="5.500" fill="#d4d4d4"/></g>
<!-- S -->
<path d="M1194 351.500 C1189 347 1180 351 1182.500 357 C1185 362 1196 361 1194.500 367 C1192.500 373.500 1181 372.500 1176.500 366.500" fill="none" stroke="url(#gold)" stroke-width="8" stroke-linecap="round"/>
<path d="M1192.500 350 C1188 347.500 1182 350.500 1183.500 355.500 C1186 360 1193 360 1193 365" fill="none" stroke="#ffe27a" stroke-width="1.800" stroke-linecap="round" filter="url(#tb1)" opacity="0.900"/>
<!-- merged pm3d right -->
<g fill="#f2f2f2"><ellipse cx="1272.800" cy="366.300" rx="12.300" ry="2.600" transform="rotate(-65 1272.800 366.300)"/><ellipse cx="1290.400" cy="358.900" rx="10.300" ry="2.300" transform="rotate(30 1290.400 358.900)"/></g>
<!-- merged pm3d left -->
<path d="M1172.800 426 C1174 415 1178 404 1185 401 C1192 400 1199 406 1203.600 412" fill="none" stroke="#f2f2f2" stroke-width="3.600" stroke-linecap="round"/>
<path d="M1172.800 426 C1174 415 1178 404 1185 401" fill="none" stroke="#f2f2f2" stroke-width="4.600" stroke-linecap="round"/>
<!-- small head -->
<path d="M1282 394 C1287.500 394 1290.500 398 1290.500 403 C1290.500 408 1289.500 411 1288.500 414 C1287.500 417 1287 419 1287.500 421 C1288.500 424 1286 427.500 1282.300 427.500 C1278.500 427.500 1276 424 1277 421 C1277.500 419 1277 417 1276 414 C1275 411 1274 408 1274 403 C1274 398 1276.500 394 1282 394Z" fill="url(#hd1)"/>
<g filter="url(#tb1)" stroke-linecap="round" fill="none"><path d="M1277.500 406 L1280.500 406.500 M1284 406.500 L1287 406" stroke="#8a8a8a" stroke-width="1.200"/><path d="M1280 413.500 L1284.500 413.500" stroke="#8a8a8a" stroke-width="1"/><path d="M1277.500 418.500 C1280 421 1284.500 421 1287 418.500" stroke="#909090" stroke-width="1.200"/><path d="M1282.300 407 L1282.300 411" stroke="#fff" stroke-width="1.400"/></g>
</svg>
<div class="nm" style="left:1140px;top:326px;width:92px">PolySphere</div>
<div class="nm" style="left:1237px;top:278px;width:91px;text-align:left">Merged_PolySph</div>
<div class="nm" style="left:1236px;top:326px;width:92px">Cylinder3D</div>
<div class="nm" style="left:1140px;top:374px;width:92px">SimpleBrush</div>
<div class="nm" style="left:1237px;top:374px;width:91px;text-align:left">Merged_PM3D_S</div>
<div class="nm" style="left:1141px;top:422px;width:91px;text-align:left">Merged_PM3D_S</div>
<div class="nm" style="left:1236px;top:422px;width:92px">PolySphere</div>
<div class="abs" style="left:1221px;top:253px;color:#f4f4f4;font-size:13.5px;line-height:16px;text-shadow:1px 1px 2px #000">5</div>
<div class="abs" style="left:1317px;top:397px;color:#f4f4f4;font-size:13.5px;line-height:16px;text-shadow:1px 1px 2px #000">5</div>
<div class="sub" style="top:456px">Subtool</div>
<div class="sub" style="top:480px">Geometry</div>
<div class="sub" style="top:504px">ArrayMesh</div>
<div class="sub" style="top:528px">NanoMesh</div>
<div class="sub" style="top:552px">Layers</div>
<div class="sub" style="top:576px">FiberMesh</div>
<div class="sub" style="top:600px">Geometry HD</div>
<div class="sub" style="top:624px">Preview</div>
<div class="sub" style="top:648px">Surface</div>
<div class="sub" style="top:672px">Deformation</div>
<div class="sub" style="top:696px">Masking</div>
<div class="sub" style="top:720px">Visibility</div>
<div class="sub" style="top:744px">Polygroups</div>
</body></html>
